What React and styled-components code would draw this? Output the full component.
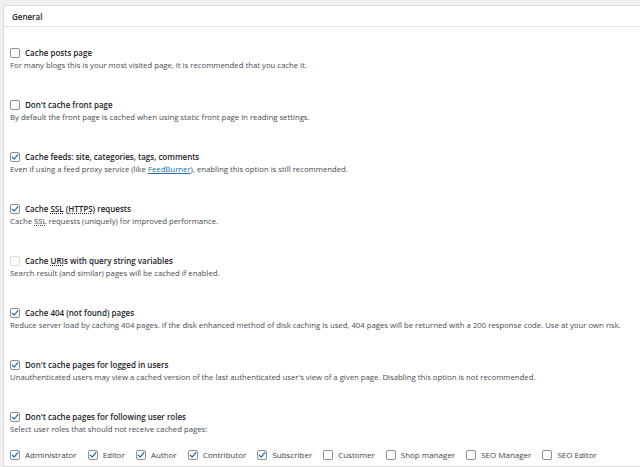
import React from "react";
import styled, { createGlobalStyle } from "styled-components";

const Global = createGlobalStyle`
  html, body { margin: 0; padding: 0; background: #f0f0f1; }
  body { font-family: "Open Sans", "Noto Sans", sans-serif; color: #1d2327; }
`;

const Page = styled.div`
  width: 640px;
  height: 467px;
  overflow: hidden;
  padding: 5px 0 0 3px;
  box-sizing: border-box;
`;

const Panel = styled.section`
  background: #fff;
  border: 1px solid #dcdcde;
  border-right: none;
  height: 100%;
  box-sizing: border-box;
`;

const PanelHeader = styled.h2`
  margin: 0;
  height: 21px;
  box-sizing: border-box;
  border-bottom: 1px solid #e4e4e6;
  padding: 0 0 0 8px;
  display: flex;
  align-items: center;
  font-size: 8px;
  font-weight: 600;
  color: #1d2327;
`;

const Body = styled.div`
  padding: 19px 0 0 6px;
  display: flex;
  flex-direction: column;
`;

const Option = styled.div`
  height: 52px;
  display: flex;
  flex-direction: column;
`;

const LabelRow = styled.label`
  display: flex;
  align-items: center;
  gap: 5px;
  height: 13px;
  font-size: 8px;
  font-weight: 600;
  color: #1d2327;
`;

const Desc = styled.p`
  margin: 0;
  height: 13px;
  line-height: 12px;
  font-size: 7.75px;
  color: #464c52;
  white-space: nowrap;
`;

const Box = styled.span`
  width: 10px;
  height: 10px;
  box-sizing: border-box;
  border: 1px solid ${(p) => (p.$disabled ? "#dcdcde" : "#8c8f94")};
  border-radius: 2px;
  background: #fff;
  display: inline-flex;
  align-items: center;
  justify-content: center;
  flex: none;
`;

const Abbr = styled.abbr`
  text-decoration: underline dotted;
  text-underline-offset: 1px;
`;

const Link = styled.a`
  color: #2271b1;
  text-decoration: underline;
`;

const Roles = styled.div`
  display: flex;
  align-items: center;
  gap: 11px;
  margin-top: 13px;
`;

const Role = styled.label`
  display: flex;
  align-items: center;
  gap: 5px;
  font-size: 8px;
  color: #3c434a;
`;

function Check({ checked, disabled }) {
  return (
    <Box $disabled={disabled}>
      {checked && (
        <svg width="8" height="8" viewBox="0 0 8 8">
          <path d="M1.3 4.2 L3.2 6.1 L6.8 1.6" fill="none" stroke="#2271b1" strokeWidth="1.3" strokeLinecap="round" strokeLinejoin="round" />
        </svg>
      )}
    </Box>
  );
}

const roles = [
  ["Administrator", true],
  ["Editor", true],
  ["Author", true],
  ["Contributor", true],
  ["Subscriber", true],
  ["Customer", false],
  ["Shop manager", false],
  ["SEO Manager", false],
  ["SEO Editor", false],
];

export default function App() {
  return (
    <Page>
      <Global />
      <Panel>
        <PanelHeader>General</PanelHeader>
        <Body>
          <Option>
            <LabelRow><Check />Cache posts page</LabelRow>
            <Desc>For many blogs this is your most visited page, it is recommended that you cache it.</Desc>
          </Option>
          <Option>
            <LabelRow><Check />Don't cache front page</LabelRow>
            <Desc>By default the front page is cached when using static front page in reading settings.</Desc>
          </Option>
          <Option>
            <LabelRow><Check checked />Cache feeds: site, categories, tags, comments</LabelRow>
            <Desc>Even if using a feed proxy service (like <Link href="#">FeedBurner</Link>), enabling this option is still recommended.</Desc>
          </Option>
          <Option>
            <LabelRow><Check checked /><span>Cache <Abbr>SSL</Abbr> (<Abbr>HTTPS</Abbr>) requests</span></LabelRow>
            <Desc>Cache <Abbr>SSL</Abbr> requests (uniquely) for improved performance.</Desc>
          </Option>
          <Option>
            <LabelRow><Check disabled /><span>Cache <Abbr>URI</Abbr>s with query string variables</span></LabelRow>
            <Desc>Search result (and similar) pages will be cached if enabled.</Desc>
          </Option>
          <Option>
            <LabelRow><Check checked />Cache 404 (not found) pages</LabelRow>
            <Desc>Reduce server load by caching 404 pages. If the disk enhanced method of disk caching is used, 404 pages will be returned with a 200 response code. Use at your own risk.</Desc>
          </Option>
          <Option>
            <LabelRow><Check checked />Don't cache pages for logged in users</LabelRow>
            <Desc>Unauthenticated users may view a cached version of the last authenticated user's view of a given page. Disabling this option is not recommended.</Desc>
          </Option>
          <Option>
            <LabelRow><Check checked />Don't cache pages for following user roles</LabelRow>
            <Desc>Select user roles that should not receive cached pages:</Desc>
            <Roles>
              {roles.map(([name, on]) => (
                <Role key={name}><Check checked={on} />{name}</Role>
              ))}
            </Roles>
          </Option>
        </Body>
      </Panel>
    </Page>
  );
}
